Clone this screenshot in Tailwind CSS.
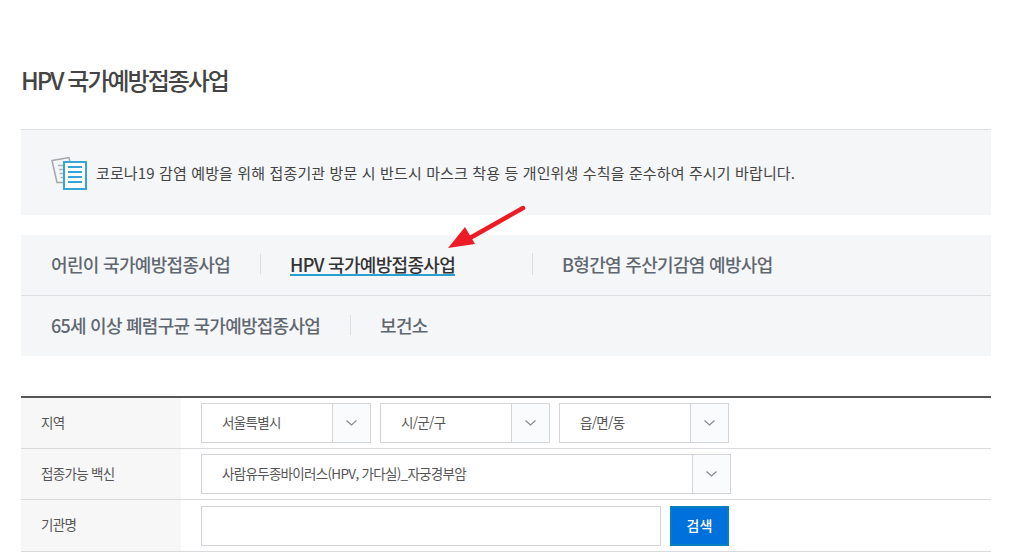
<!DOCTYPE html>
<html lang="ko">
<head>
  <meta charset="UTF-8" />
  <title>HPV 국가예방접종사업</title>
  <script src="https://cdn.jsdelivr.net/npm/@tailwindcss/browser@4"></script>
</head>
<body class="bg-white font-['Noto_Sans_CJK_KR','Noto_Sans',sans-serif] text-[#444] overflow-hidden">
  <div class="relative w-[1011px] h-[555px] overflow-hidden px-[20px] pl-[21px]">
    <!-- 제목 -->
    <h1 class="pt-[63px] h-[129px] text-[24px] leading-[34px] font-medium tracking-[-2px] text-[#444]">HPV 국가예방접종사업</h1>

    <!-- 안내 -->
    <div class="h-[86px] border-t border-[#dcdee2] bg-[#f5f6f8] flex items-center pl-[30px] gap-[8px]">
      <svg width="37" height="36" viewBox="0 0 37 36" fill="none">
        <path d="M1 5.5L18 2.5L19 7H13V27.5H6L1 5.5Z" fill="#f5f6f8" stroke="#a3a6aa" stroke-width="1.5"/>
        <path d="M7 10.5H13M8 14.5H13M8.5 18.5H13M9.5 22.5H13" stroke="#b0b3b7" stroke-width="1.5"/>
        <rect x="13" y="7" width="22" height="27" fill="#fff" stroke="#35a5d8" stroke-width="2"/>
        <path d="M17 12H31M17 17H31M17 22H31M17 27H31" stroke="#35a5d8" stroke-width="1.8"/>
      </svg>
      <p class="text-[15px] leading-[22px] tracking-[0.13px] text-[#444]">코로나19 감염 예방을 위해 접종기관 방문 시 반드시 마스크 착용 등 개인위생 수칙을 준수하여 주시기 바랍니다.</p>
    </div>

    <!-- 탭 -->
    <div class="mt-[20px] h-[121px] bg-[#f5f6f8] text-[18px] font-medium tracking-[-0.68px] text-[#5f6770]">
      <div class="h-[61px] border-b border-[#dcdee2] flex items-center pl-[30px] pb-[2px]">
        <span class="w-[210px] border-r border-[#dcdee2] leading-[20px]">어린이 국가예방접종사업</span>
        <span class="w-[272px] pl-[29px] border-r border-[#dcdee2] leading-[20px]"><span class="inline-block text-[#333] leading-[20px] border-b-2 border-[#2a9fd0] h-[22px] translate-y-[1px]">HPV 국가예방접종사업</span></span>
        <span class="pl-[29px] leading-[20px]">B형간염 주산기감염 예방사업</span>
      </div>
      <div class="h-[60px] flex items-center pl-[30px] pb-[2px]">
        <span class="w-[300px] border-r border-[#dcdee2] leading-[20px] tracking-[-0.75px]">65세 이상 폐렴구균 국가예방접종사업</span>
        <span class="pl-[29px] leading-[20px]">보건소</span>
      </div>
    </div>

    <!-- 검색 -->
    <div class="mt-[40px] border-t-2 border-[#555] text-[13.5px] tracking-[-0.7px]">
      <div class="h-[51px] border-b border-[#d8dade] flex">
        <div class="w-[160px] shrink-0 bg-[#f7f7f7] pl-[20px] pb-[2px] flex items-center text-[#555]">지역</div>
        <div class="pl-[20px] pt-[5px] flex gap-[9px]">
          <div class="w-[170px] h-[40px] border border-[#d3d5d9] flex">
            <span class="flex-1 pl-[20px] pb-[2px] flex items-center text-[#555]">서울특별시</span>
            <span class="w-[38px] border-l border-[#d3d5d9] bg-[#fafbfd] flex items-center justify-center">
              <svg width="13" height="8" viewBox="0 0 13 8" fill="none"><path d="M1.5 1.5L6.5 6L11.5 1.5" stroke="#85878b" stroke-width="1.1"/></svg>
            </span>
          </div>
          <div class="w-[170px] h-[40px] border border-[#d3d5d9] flex">
            <span class="flex-1 pl-[20px] pb-[2px] flex items-center text-[#555]">시/군/구</span>
            <span class="w-[38px] border-l border-[#d3d5d9] bg-[#fafbfd] flex items-center justify-center">
              <svg width="13" height="8" viewBox="0 0 13 8" fill="none"><path d="M1.5 1.5L6.5 6L11.5 1.5" stroke="#85878b" stroke-width="1.1"/></svg>
            </span>
          </div>
          <div class="w-[170px] h-[40px] border border-[#d3d5d9] flex">
            <span class="flex-1 pl-[20px] pb-[2px] flex items-center text-[#555]">읍/면/동</span>
            <span class="w-[38px] border-l border-[#d3d5d9] bg-[#fafbfd] flex items-center justify-center">
              <svg width="13" height="8" viewBox="0 0 13 8" fill="none"><path d="M1.5 1.5L6.5 6L11.5 1.5" stroke="#85878b" stroke-width="1.1"/></svg>
            </span>
          </div>
        </div>
      </div>
      <div class="h-[51px] border-b border-[#d8dade] flex">
        <div class="w-[160px] shrink-0 bg-[#f7f7f7] pl-[20px] pb-[2px] flex items-center text-[#555]">접종가능 백신</div>
        <div class="pl-[20px] pt-[5px]">
          <div class="w-[530px] h-[40px] border border-[#d3d5d9] flex">
            <span class="flex-1 pl-[20px] pb-[2px] flex items-center text-[#555]">사람유두종바이러스(HPV, 가다실)_자궁경부암</span>
            <span class="w-[38px] border-l border-[#d3d5d9] bg-[#fafbfd] flex items-center justify-center">
              <svg width="13" height="8" viewBox="0 0 13 8" fill="none"><path d="M1.5 1.5L6.5 6L11.5 1.5" stroke="#85878b" stroke-width="1.1"/></svg>
            </span>
          </div>
        </div>
      </div>
      <div class="h-[52px] border-b border-[#d8dade] flex">
        <div class="w-[160px] shrink-0 bg-[#f7f7f7] pl-[20px] pb-[2px] flex items-center text-[#555]">기관명</div>
        <div class="pl-[20px] pt-[6px] flex gap-[9px]">
          <div class="w-[460px] h-[40px] border border-[#d3d5d9]"></div>
          <button class="w-[59px] h-[40px] pb-[2px] bg-[#0070dd] border-2 border-[#0a7cc0] text-white font-medium tracking-[0px] text-[14px]">검색</button>
        </div>
      </div>
    </div>

    <!-- 화살표 -->
    <svg class="absolute left-[440px] top-[198px]" width="95" height="60" viewBox="0 0 95 60" fill="none">
      <path d="M83 10L30 40" stroke="#ed1c24" stroke-width="4.5" stroke-linecap="round"/>
      <path d="M8 50L25 29L35 46Z" fill="#ed1c24"/>
    </svg>
  </div>
</body>
</html>
